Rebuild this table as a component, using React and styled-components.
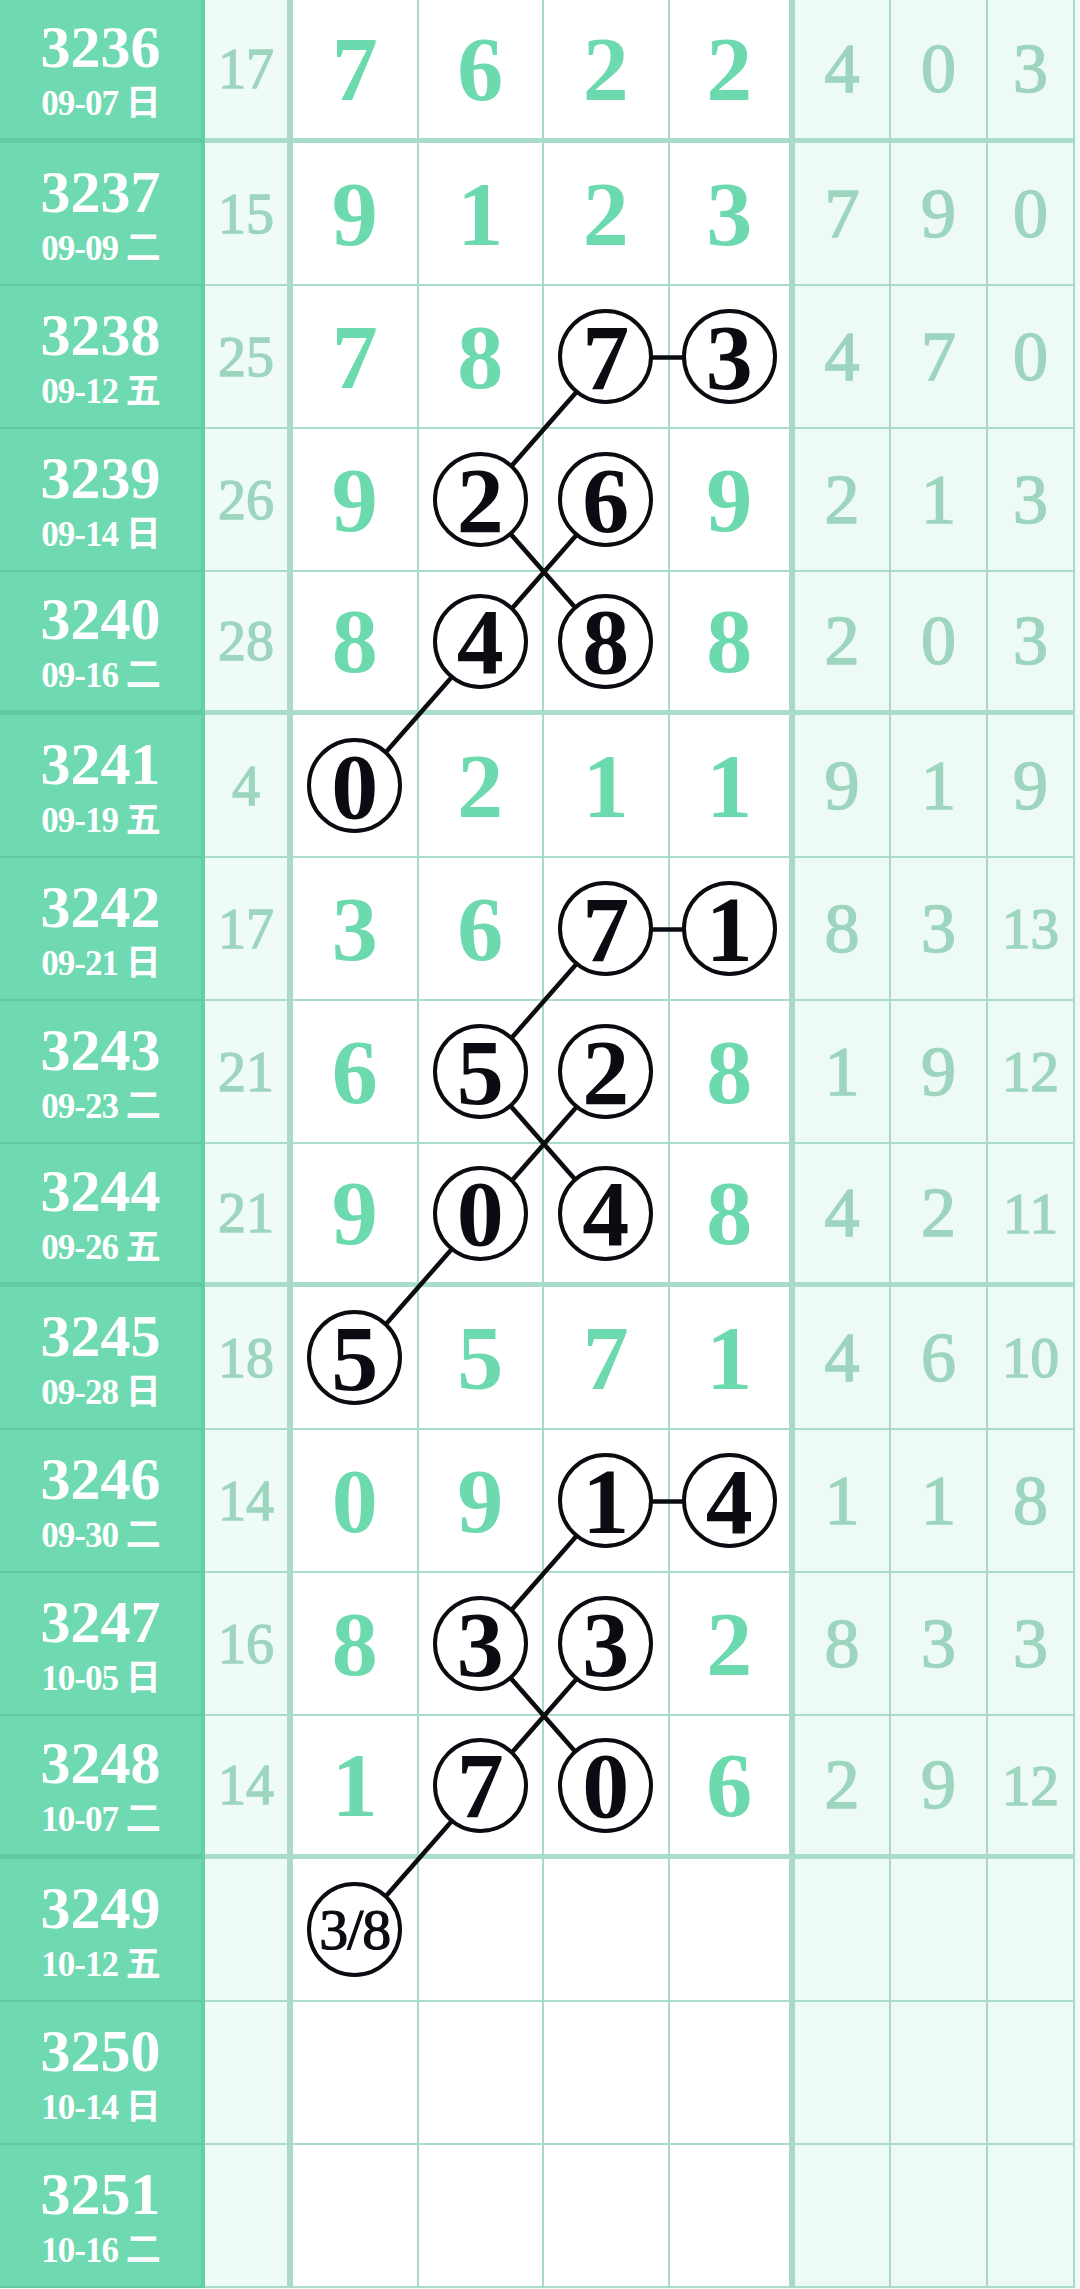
import React from 'react';
import styled, { createGlobalStyle } from 'styled-components';

const GlobalStyle = createGlobalStyle`
    html, body {
        margin: 0;
        padding: 0;
        background: #eefbf6;
    }
    * { box-sizing: border-box; }
`;

const COLS = [205, 88, 125.5, 125.5, 125.5, 125.5, 96, 97, 87];
const ROW_H = 143;
const SERIF = '"Liberation Serif", "Noto Sans CJK SC", serif';

const rows = [
    { id: '3236', date: '09-07', day: '日', sum: '17', nums: ['7', '6', '2', '2'], ring: [], tail: ['4', '0', '3'] },
    { id: '3237', date: '09-09', day: '二', sum: '15', nums: ['9', '1', '2', '3'], ring: [], tail: ['7', '9', '0'] },
    { id: '3238', date: '09-12', day: '五', sum: '25', nums: ['7', '8', '7', '3'], ring: [2, 3], tail: ['4', '7', '0'] },
    { id: '3239', date: '09-14', day: '日', sum: '26', nums: ['9', '2', '6', '9'], ring: [1, 2], tail: ['2', '1', '3'] },
    { id: '3240', date: '09-16', day: '二', sum: '28', nums: ['8', '4', '8', '8'], ring: [1, 2], tail: ['2', '0', '3'] },
    { id: '3241', date: '09-19', day: '五', sum: '4', nums: ['0', '2', '1', '1'], ring: [0], tail: ['9', '1', '9'] },
    { id: '3242', date: '09-21', day: '日', sum: '17', nums: ['3', '6', '7', '1'], ring: [2, 3], tail: ['8', '3', '13'] },
    { id: '3243', date: '09-23', day: '二', sum: '21', nums: ['6', '5', '2', '8'], ring: [1, 2], tail: ['1', '9', '12'] },
    { id: '3244', date: '09-26', day: '五', sum: '21', nums: ['9', '0', '4', '8'], ring: [1, 2], tail: ['4', '2', '11'] },
    { id: '3245', date: '09-28', day: '日', sum: '18', nums: ['5', '5', '7', '1'], ring: [0], tail: ['4', '6', '10'] },
    { id: '3246', date: '09-30', day: '二', sum: '14', nums: ['0', '9', '1', '4'], ring: [2, 3], tail: ['1', '1', '8'] },
    { id: '3247', date: '10-05', day: '日', sum: '16', nums: ['8', '3', '3', '2'], ring: [1, 2], tail: ['8', '3', '3'] },
    { id: '3248', date: '10-07', day: '二', sum: '14', nums: ['1', '7', '0', '6'], ring: [1, 2], tail: ['2', '9', '12'] },
    { id: '3249', date: '10-12', day: '五', sum: '', nums: ['3/8', '', '', ''], ring: [0], tail: ['', '', ''] },
    { id: '3250', date: '10-14', day: '日', sum: '', nums: ['', '', '', ''], ring: [], tail: ['', '', ''] },
    { id: '3251', date: '10-16', day: '二', sum: '', nums: ['', '', '', ''], ring: [], tail: ['', '', ''] },
];

// rows after which a heavier rule is drawn
const GROUP_ENDS = [0, 4, 8, 12];

// connecting lines between circled numbers: [row, col] pairs, col = 0..3 in the number block
const LINKS = [];
[2, 6, 10].forEach(r => {
    LINKS.push([[r, 2], [r, 3]]);
    LINKS.push([[r, 2], [r + 1, 1]]);
    LINKS.push([[r + 1, 1], [r + 2, 2]]);
    LINKS.push([[r + 1, 2], [r + 2, 1]]);
    LINKS.push([[r + 2, 1], [r + 3, 0]]);
});

const numLeft = COLS[0] + COLS[1];
const cx = c => numLeft + COLS[2] * c + COLS[2] / 2;
const cy = r => r * ROW_H + ROW_H / 2;
const gridWidth = COLS.reduce((a, b) => a + b, 0);

const Chart = styled.div`
    position: relative;
    width: ${gridWidth}px;
    display: grid;
    grid-template-columns: ${COLS.map(w => w + 'px').join(' ')};
    grid-auto-rows: ${ROW_H}px;
    font-family: ${SERIF};
`;

const Cell = styled.div`
    display: flex;
    align-items: center;
    justify-content: center;
    border-bottom: ${p => (p.$group ? '5px' : '2px')} solid #a9ddcb;
    border-right: ${p => (p.$heavy ? '6px' : '2px')} solid #aad9c8;
`;

const IssueCell = styled(Cell)`
    flex-direction: column;
    background: #6fdab1;
    color: #ffffff;
    font-weight: 700;
    border-bottom-color: #5fcb9f;
    border-right: 4px solid #64d0a6;
`;

const IssueNo = styled.div`
    font-size: 60px;
    line-height: 1;
`;

const IssueDate = styled.div`
    font-size: 35px;
    line-height: 1;
    margin-top: 9px;
    letter-spacing: -1px;
`;

const SumCell = styled(Cell)`
    background: #eefbf6;
    color: #9dd5bf;
    font-size: 56px;
    line-height: 1;
    -webkit-text-stroke: 1.3px #9dd5bf;
`;

const NumCell = styled(Cell)`
    background: #ffffff;
    color: #6dd9af;
    font-size: 92px;
    font-weight: 700;
    line-height: 1;
`;

const TailCell = styled(Cell)`
    background: #edfaf5;
    color: #9dd5bf;
    font-size: ${p => (p.$long ? '57px' : '70px')};
    line-height: 1;
    -webkit-text-stroke: 1.5px #9dd5bf;
`;

const Ball = styled.div`
    position: relative;
    z-index: 2;
    width: 95px;
    height: 95px;
    border-radius: 50%;
    border: 4px solid #0b0b12;
    background: #ffffff;
    color: #0b0b12;
    display: flex;
    align-items: center;
    justify-content: center;
    font-size: ${p => (p.$small ? '58px' : '94px')};
    font-weight: ${p => (p.$small ? 400 : 700)};
    letter-spacing: ${p => (p.$small ? '-1px' : '0')};
    -webkit-text-stroke: ${p => (p.$small ? '1.2px #0b0b12' : '0')};
`;

const Links = styled.svg`
    position: absolute;
    left: 0;
    top: 0;
    z-index: 1;
    pointer-events: none;
`;

export default function App() {
    return (
        <>
            <GlobalStyle />
            <Chart>
                {rows.map((row, r) => {
                    const group = GROUP_ENDS.includes(r);
                    return (
                        <React.Fragment key={row.id}>
                            <IssueCell $group={group}>
                                <IssueNo>{row.id}</IssueNo>
                                <IssueDate>{row.date} {row.day}</IssueDate>
                            </IssueCell>
                            <SumCell $group={group} $heavy>{row.sum}</SumCell>
                            {row.nums.map((n, c) => (
                                <NumCell key={c} $group={group} $heavy={c === 3}>
                                    {row.ring.includes(c) ? <Ball $small={n.length > 1}>{n}</Ball> : n}
                                </NumCell>
                            ))}
                            {row.tail.map((t, c) => (
                                <TailCell key={c} $group={group} $long={t.length > 1}>{t}</TailCell>
                            ))}
                        </React.Fragment>
                    );
                })}
                <Links width={gridWidth} height={rows.length * ROW_H}>
                    {LINKS.map(([a, b], i) => (
                        <line key={i} x1={cx(a[1])} y1={cy(a[0])} x2={cx(b[1])} y2={cy(b[0])}
                            stroke="#0b0b12" strokeWidth="4.5" />
                    ))}
                </Links>
            </Chart>
        </>
    );
}
